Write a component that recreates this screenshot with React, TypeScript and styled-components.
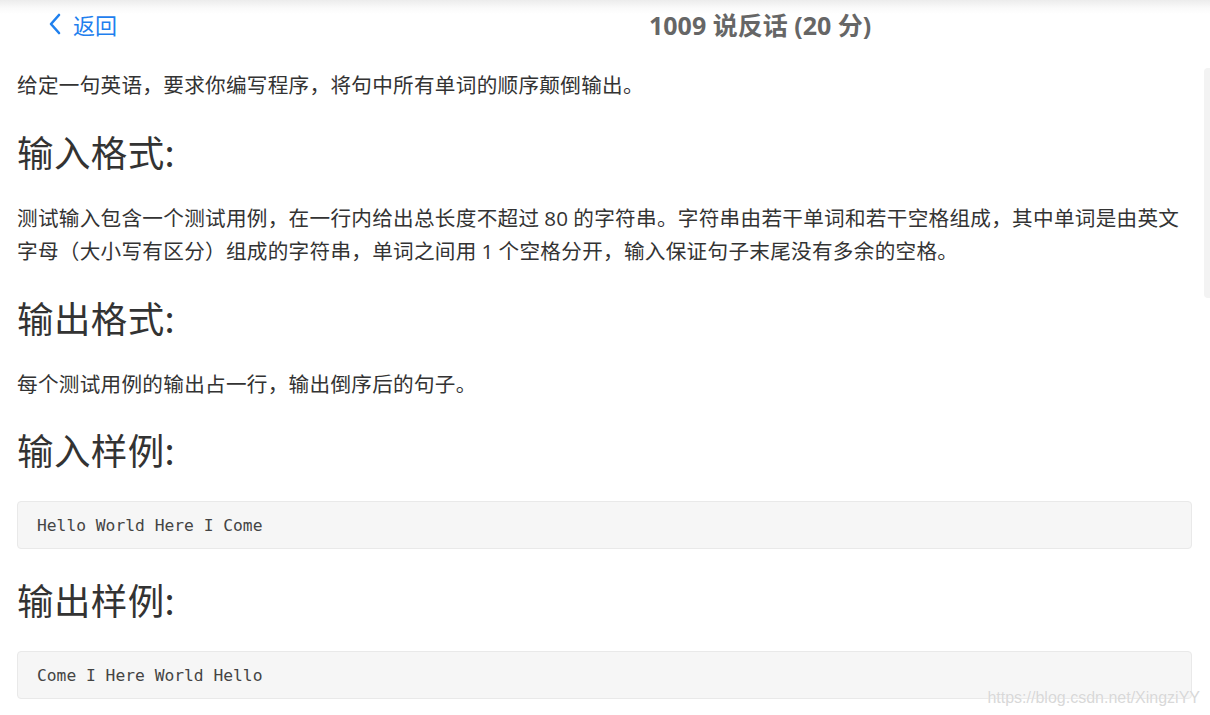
import React from "react"
import styled, {createGlobalStyle} from "styled-components"

const GlobalStyle = createGlobalStyle`
  html, body {
    margin: 0;
    padding: 0;
    background: #fff;
  }
  body {
    font-family: "Open Sans", "Noto Sans CJK SC", sans-serif;
    color: #333;
    overflow: hidden;
  }
`

const Page = styled.div`
  position: relative;
  width: 1210px;
  height: 715px;
  overflow: hidden;
`

const Header = styled.header`
  height: 52px;
  box-sizing: border-box;
  padding-bottom: 5px;
  display: flex;
  align-items: center;
  background: linear-gradient(#ececec 0px, #fafafa 8px, #fff 14px);
`

const Back = styled.a`
  width: 601px;
  padding-left: 48px;
  display: flex;
  align-items: center;
  gap: 11px;
  color: #1f80ee;
  font-family: "Noto Sans CJK SC", sans-serif;
  font-size: 22px;
  text-decoration: none;
  cursor: pointer;
  svg { display: block; }
`

const Title = styled.h1`
  margin: 0;
  font-family: "Open Sans", "Noto Sans CJK SC", sans-serif;
  font-size: 25px;
  font-weight: 700;
  color: #666;
  white-space: nowrap;
`

const Content = styled.main`
  display: flex;
  flex-direction: column;
  padding: 16px 18px 0 17px;
`

const Para = styled.p<{$first?: boolean}>`
  margin: 0 0 ${p => p.$first ? 1 : 0}px;
  font-family: "Noto Sans CJK SC", sans-serif;
  font-size: 20.6px;
  letter-spacing: 0.3px;
  line-height: 32px;
  color: #333;
  .num { font-family: "Open Sans", sans-serif; }
`

const Heading = styled.h2`
  margin: 29px 0 28px;
  font-family: "Noto Sans CJK SC", sans-serif;
  font-size: 36.5px;
  font-weight: 400;
  letter-spacing: 0.4px;
  line-height: 43px;
  color: #333;
`

const Code = styled.pre`
  margin: 2px 0 0;
  height: 48px;
  box-sizing: border-box;
  display: flex;
  align-items: center;
  padding: 0 19px;
  background: #f6f6f6;
  border: 1px solid #e9e9e9;
  border-radius: 4px;
  font-family: "DejaVu Sans Mono", monospace;
  font-size: 16.3px;
  color: #444;
`

const ScrollThumb = styled.div`
  position: absolute;
  right: 0;
  top: 68px;
  width: 6px;
  height: 230px;
  background: #f3f3f3;
  border-radius: 4px 0 0 4px;
`

const Watermark = styled.div`
  position: absolute;
  right: 10px;
  bottom: 8px;
  font-family: "Liberation Sans", sans-serif;
  font-size: 16px;
  color: #d8d8d8;
  text-shadow: 0 0 1px #fff;
`

function Chevron() {
  return <svg width="14" height="22" viewBox="0 0 14 22">
    <path d="M11 2 L3 11 L11 20" fill="none" stroke="#1f80ee" strokeWidth="2.6" strokeLinecap="round" strokeLinejoin="round"/>
  </svg>
}

export default function App() {
  return <Page>
    <GlobalStyle/>
    <Header>
      <Back><Chevron/>返回</Back>
      <Title>1009 说反话 (20 分)</Title>
    </Header>

    <Content>
      <Para $first>给定一句英语，要求你编写程序，将句中所有单词的顺序颠倒输出。</Para>

      <Heading>输入格式:</Heading>
      <Para>
        测试输入包含一个测试用例，在一行内给出总长度不超过 <span className="num">80</span> 的字符串。字符串由若干单词和若干空格组成，其中单词是由英文字母（大小写有区分）组成的字符串，单词之间用 <span className="num">1</span> 个空格分开，输入保证句子末尾没有多余的空格。
      </Para>

      <Heading>输出格式:</Heading>
      <Para>每个测试用例的输出占一行，输出倒序后的句子。</Para>

      <Heading>输入样例:</Heading>
      <Code>Hello World Here I Come</Code>

      <Heading>输出样例:</Heading>
      <Code>Come I Here World Hello</Code>
    </Content>

    <ScrollThumb/>
    <Watermark>https://blog.csdn.net/XingziYY</Watermark>
  </Page>
}
